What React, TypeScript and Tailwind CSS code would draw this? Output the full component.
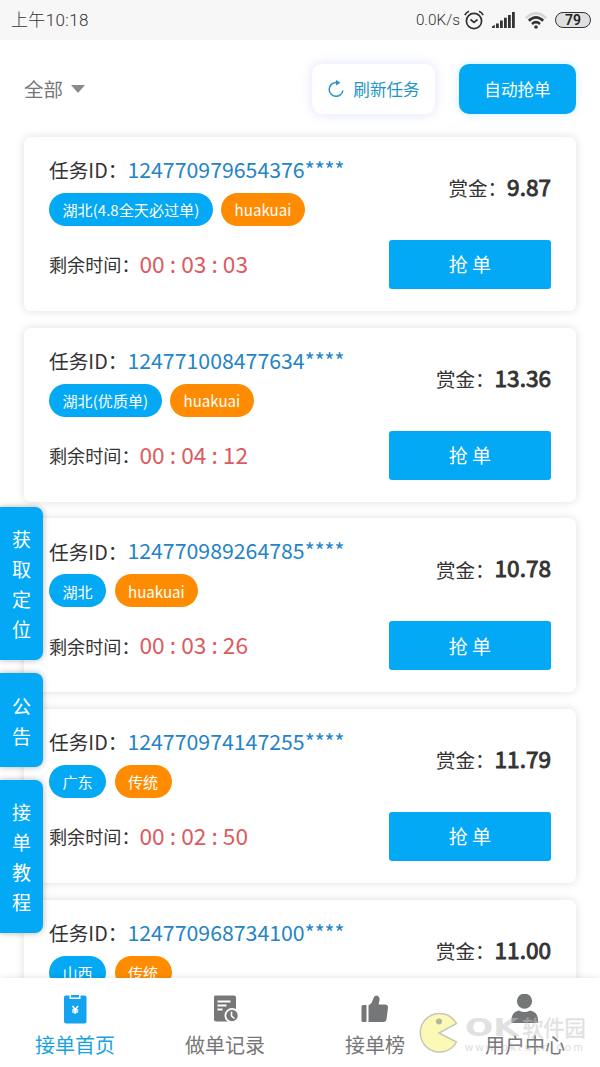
const tasks = [
    { id: "124770979654376", area: "湖北(4.8全天必过单)", type: "huakuai", time: "00 : 03 : 03", price: "9.87" },
    { id: "124771008477634", area: "湖北(优质单)", type: "huakuai", time: "00 : 04 : 12", price: "13.36" },
    { id: "124770989264785", area: "湖北", type: "huakuai", time: "00 : 03 : 26", price: "10.78" },
    { id: "124770974147255", area: "广东", type: "传统", time: "00 : 02 : 50", price: "11.79" },
    { id: "124770968734100", area: "山西", type: "传统", time: "00 : 02 : 41", price: "11.00" },
]

const sideTabs = ["获取定位", "公告", "接单教程"]

function StatusBar() {
    return (
        <div className="flex h-10 shrink-0 items-center justify-between bg-[#f7f7f7] pl-[11px] pr-[9px] text-[#444]">
            <span className="pt-[2px] font-['Roboto','Noto_Sans_CJK_SC',sans-serif] text-[17px] font-light tracking-[0.35px] text-[#333]">上午10:18</span>
            <div className="flex items-center">
                <span className="pt-px font-['Roboto',sans-serif] text-[15.3px] font-light text-[#333]">0.0K/s</span>
                <svg className="ml-1 h-5 w-5" viewBox="0 0 20 20" fill="none" stroke="#333" strokeWidth="1.7">
                    <circle cx="10" cy="11" r="7.6" />
                    <path d="M.8 5.2Q2.2 2.4 5 1.300M19.200 5.200Q17.800 2.400 15 1.300M6.500 9.500L10 12.300l3.500-2.800" />
                </svg>
                <svg className="ml-2 h-4 w-[23px]" viewBox="0 0 23 16" fill="#333">
                    <path d="M0 16v-1.500l2.800-1.700V16zM4 11.500h2.800V16H4zM8 8.500h2.800V16H8zM12 5.800h2.800V16H12zM16 3h2.800v13H16zM20 0h2.800v16H20z" />
                </svg>
                <svg className="ml-2.5 h-[17px] w-[22px]" viewBox="0 0 22 17" fill="none" strokeWidth="2.6">
                    <path d="M.8 6.200Q11-3.400 21.200 6.200" stroke="#d6d6d6" />
                    <path d="M3.800 8.700Q11 2 18.200 8.700M7 12Q11 8.400 15 12" stroke="#333" />
                    <circle cx="11" cy="15" r="1.800" fill="#333" />
                </svg>
                <div className="ml-2 flex h-4 w-[36px] items-center justify-center rounded-full border-[1.5px] border-[#333] bg-[#e0e0e0] font-['Roboto',sans-serif] text-[14px] font-semibold leading-none text-[#222]">
                    79
                </div>
            </div>
        </div>
    )
}

function TopBar() {
    return (
        <div className="flex h-[97px] shrink-0 items-center px-6">
            <div className="flex flex-1 items-center text-[19.5px] text-[#777]">
                全部
                <span className="ml-2 h-0 w-0 border-x-[7px] border-t-[8px] border-x-transparent border-t-[#8a8a8a]"></span>
            </div>
            <button className="mr-6 flex h-[50px] w-[123px] items-center justify-center rounded-[10px] bg-white pt-px text-[16.6px] text-[#2295c6] shadow-[0_0_12px_rgba(90,110,240,0.2)]">
                <svg className="mr-2 h-[18px] w-[18px]" viewBox="0 0 18 18" fill="none" stroke="#2295c6" strokeWidth="1.5">
                    <path d="M10.500 2.500H8.700a6.900 6.900 0 1 0 7.200 8" />
                    <path d="M9 0v5.400l4.500-2.700z" fill="#2295c6" stroke="none" />
                </svg>
                刷新任务
            </button>
            <button className="h-[50px] w-[117px] rounded-[10px] bg-[#03a9f4] pt-[2px] text-[16.6px] text-white shadow-[0_0_8px_rgba(3,169,244,0.2)]">
                自动抢单
            </button>
        </div>
    )
}

function TaskCard({ task }: { task: typeof tasks[number] }) {
    return (
        <div className="flex h-[174px] shrink-0 justify-between rounded-[7px] bg-white px-[25px] shadow-[0_0_10px_rgba(0,0,0,0.13)]">
            <div className="flex flex-col items-start pt-[17px]">
                <div className="flex h-[30px] items-center whitespace-nowrap">
                    <span className="pt-[2px] text-[19.7px] text-[#333]">任务ID：</span>
                    <span className="text-[21.3px] text-[#2484c6]">{task.id}****</span>
                </div>
                <div className="mt-[9px] flex gap-[8.3px] whitespace-nowrap text-[15.1px] text-white">
                    <span className="flex h-[33px] items-center rounded-full bg-[#03a9f4] px-[13.5px]">{task.area}</span>
                    <span className="flex h-[33px] items-center rounded-full bg-[#ff8c00] px-[13.5px]">{task.type}</span>
                </div>
                <div className="mt-[23px] flex h-[30px] items-center whitespace-nowrap">
                    <span className="pt-[2px] text-[18.1px] text-[#333]">剩余时间：</span>
                    <span className="text-[22.7px] text-[#dc5b60]">{task.time}</span>
                </div>
            </div>
            <div className="flex flex-col items-end pt-[34px]">
                <div className="flex h-[32px] items-center text-[#333]">
                    <span className="pt-[2px] text-[19.5px]">赏金：</span>
                    <span className="text-[22.6px] [-webkit-text-stroke:0.9px_#333]">{task.price}</span>
                </div>
                <button className="mt-[37px] h-[49px] w-[162px] rounded-[3px] bg-[#03a9f4] text-[19px] text-white">
                    抢 单
                </button>
            </div>
        </div>
    )
}

function SideTabs() {
    return (
        <div className="absolute left-0 top-[507px] flex flex-col gap-[13px]">
            {sideTabs.map((tab) => (
                <div key={tab} className="flex w-[43px] flex-col items-center rounded-r-[8px] bg-[#03a9f4] pb-4 pt-[17.4px] text-[19px] leading-[30px] text-white shadow-[0_0_6px_rgba(0,0,0,0.3)]">
                    {tab.split("").map((c) => (
                        <span key={c}>{c}</span>
                    ))}
                </div>
            ))}
        </div>
    )
}

function BottomNav() {
    return (
        <div className="relative grid h-[89px] shrink-0 grid-cols-4 bg-white text-[20px] text-[#777] shadow-[0_0_6px_rgba(0,0,0,0.13)]">
            <div className="flex flex-col items-center pt-4 text-[#1ba4dc]">
                <svg className="h-8 w-8" viewBox="0 0 32 32">
                    <path d="M6.500 1.500H10.500V5h11V1.500H25.500Q27.500 1.500 27.500 3.500v24q0 2-2 2H7q-2 0-2-2V3.500q0-2 1.500-2z" fill="#14a3ee" />
                    <path d="M12 1h8v2.500h-8z" fill="#14a3ee" />
                    <path d="M13.500 12l2.700 3.500L19 12M16.200 15.500V20M13.200 15.900h6M13.200 18h6" fill="none" stroke="#fff" strokeWidth="1.5" />
                </svg>
                <span className="mt-1 leading-[30px]">接单首页</span>
            </div>
            <div className="flex flex-col items-center pt-4">
                <svg className="h-8 w-8" viewBox="0 0 32 32">
                    <path d="M6 1.500h19q2 0 2 2v24H7q-2 0-2-2v-22q0-2 1-2z" fill="#777" />
                    <path d="M8.500 7.500h13M8.500 11.500h9M8.500 15.500h5" stroke="#fff" strokeWidth="1.8" />
                    <circle cx="23" cy="21.500" r="6.600" fill="#777" stroke="#fff" strokeWidth="1.8" />
                    <path d="M22.500 17.500V22l3 2.500" fill="none" stroke="#fff" strokeWidth="1.6" />
                </svg>
                <span className="mt-1 leading-[30px]">做单记录</span>
            </div>
            <div className="flex flex-col items-center pt-4">
                <svg className="h-8 w-8" viewBox="0 0 32 32" fill="#747678">
                    <path d="M4 11h3.500v17H4q-1.500 0-1.500-1.500v-14Q2.500 11 4 11zM9.500 28V11.500l3-2.500 2.500-6Q16.500 .5 19 2q2 1.500 1.500 4.500L19.500 10.500H26q3 0 3 3L27.500 25.500q-.5 2.500-3 2.500z" />
                </svg>
                <span className="mt-1 leading-[30px]">接单榜</span>
            </div>
            <div className="flex flex-col items-center pt-4">
                <svg className="h-8 w-8" viewBox="0 0 32 32" fill="#747678">
                    <circle cx="15.500" cy="7.200" r="7.600" />
                    <path d="M2.500 29v-3q0-8 7.500-9.500 5.500 3 11 0Q29 18 29 26v3z" />
                </svg>
                <span className="mt-1 leading-[30px]">用户中心</span>
            </div>
        </div>
    )
}

function Watermark() {
    return (
        <div className="absolute left-[418px] top-[1013px] flex">
            <svg className="h-[42px] w-[42px] opacity-65" viewBox="0 0 42 42">
                <path d="M38.500 10.500A19.300 19.300 0 1 0 38.500 29L21 20z" fill="#fbf690" stroke="#a9a994" strokeWidth="1.5" />
                <circle cx="21" cy="8.500" r="3" fill="#8d8d74" />
            </svg>
            <div className="flex flex-col pl-[5px] opacity-50">
                <div className="flex h-[28px] items-center text-[#c4c4c4]">
                    <span className="w-[57px] origin-left scale-x-[1.33] font-['DejaVu_Sans',sans-serif] text-[25px] font-bold leading-none">OK</span>
                    <span className="text-[21.3px] leading-none [-webkit-text-stroke:0.4px_#c4c4c4]">软件园</span>
                </div>
                <span className="font-['Liberation_Sans',sans-serif] text-[11px] leading-[12px] tracking-[2.6px] text-[#bbb]">www.okruan.com</span>
            </div>
        </div>
    )
}

function App() {
    return (
        <div className="relative flex h-[1067px] w-[600px] flex-col overflow-hidden bg-white font-['Noto_Sans_CJK_SC',sans-serif]">
            <StatusBar />
            <TopBar />
            <div className="flex min-h-0 flex-1 flex-col gap-[16.7px] px-6">
                {tasks.map((task) => (
                    <TaskCard key={task.id} task={task} />
                ))}
            </div>
            <BottomNav />
            <SideTabs />
            <Watermark />
        </div>
    )
}

export default App
